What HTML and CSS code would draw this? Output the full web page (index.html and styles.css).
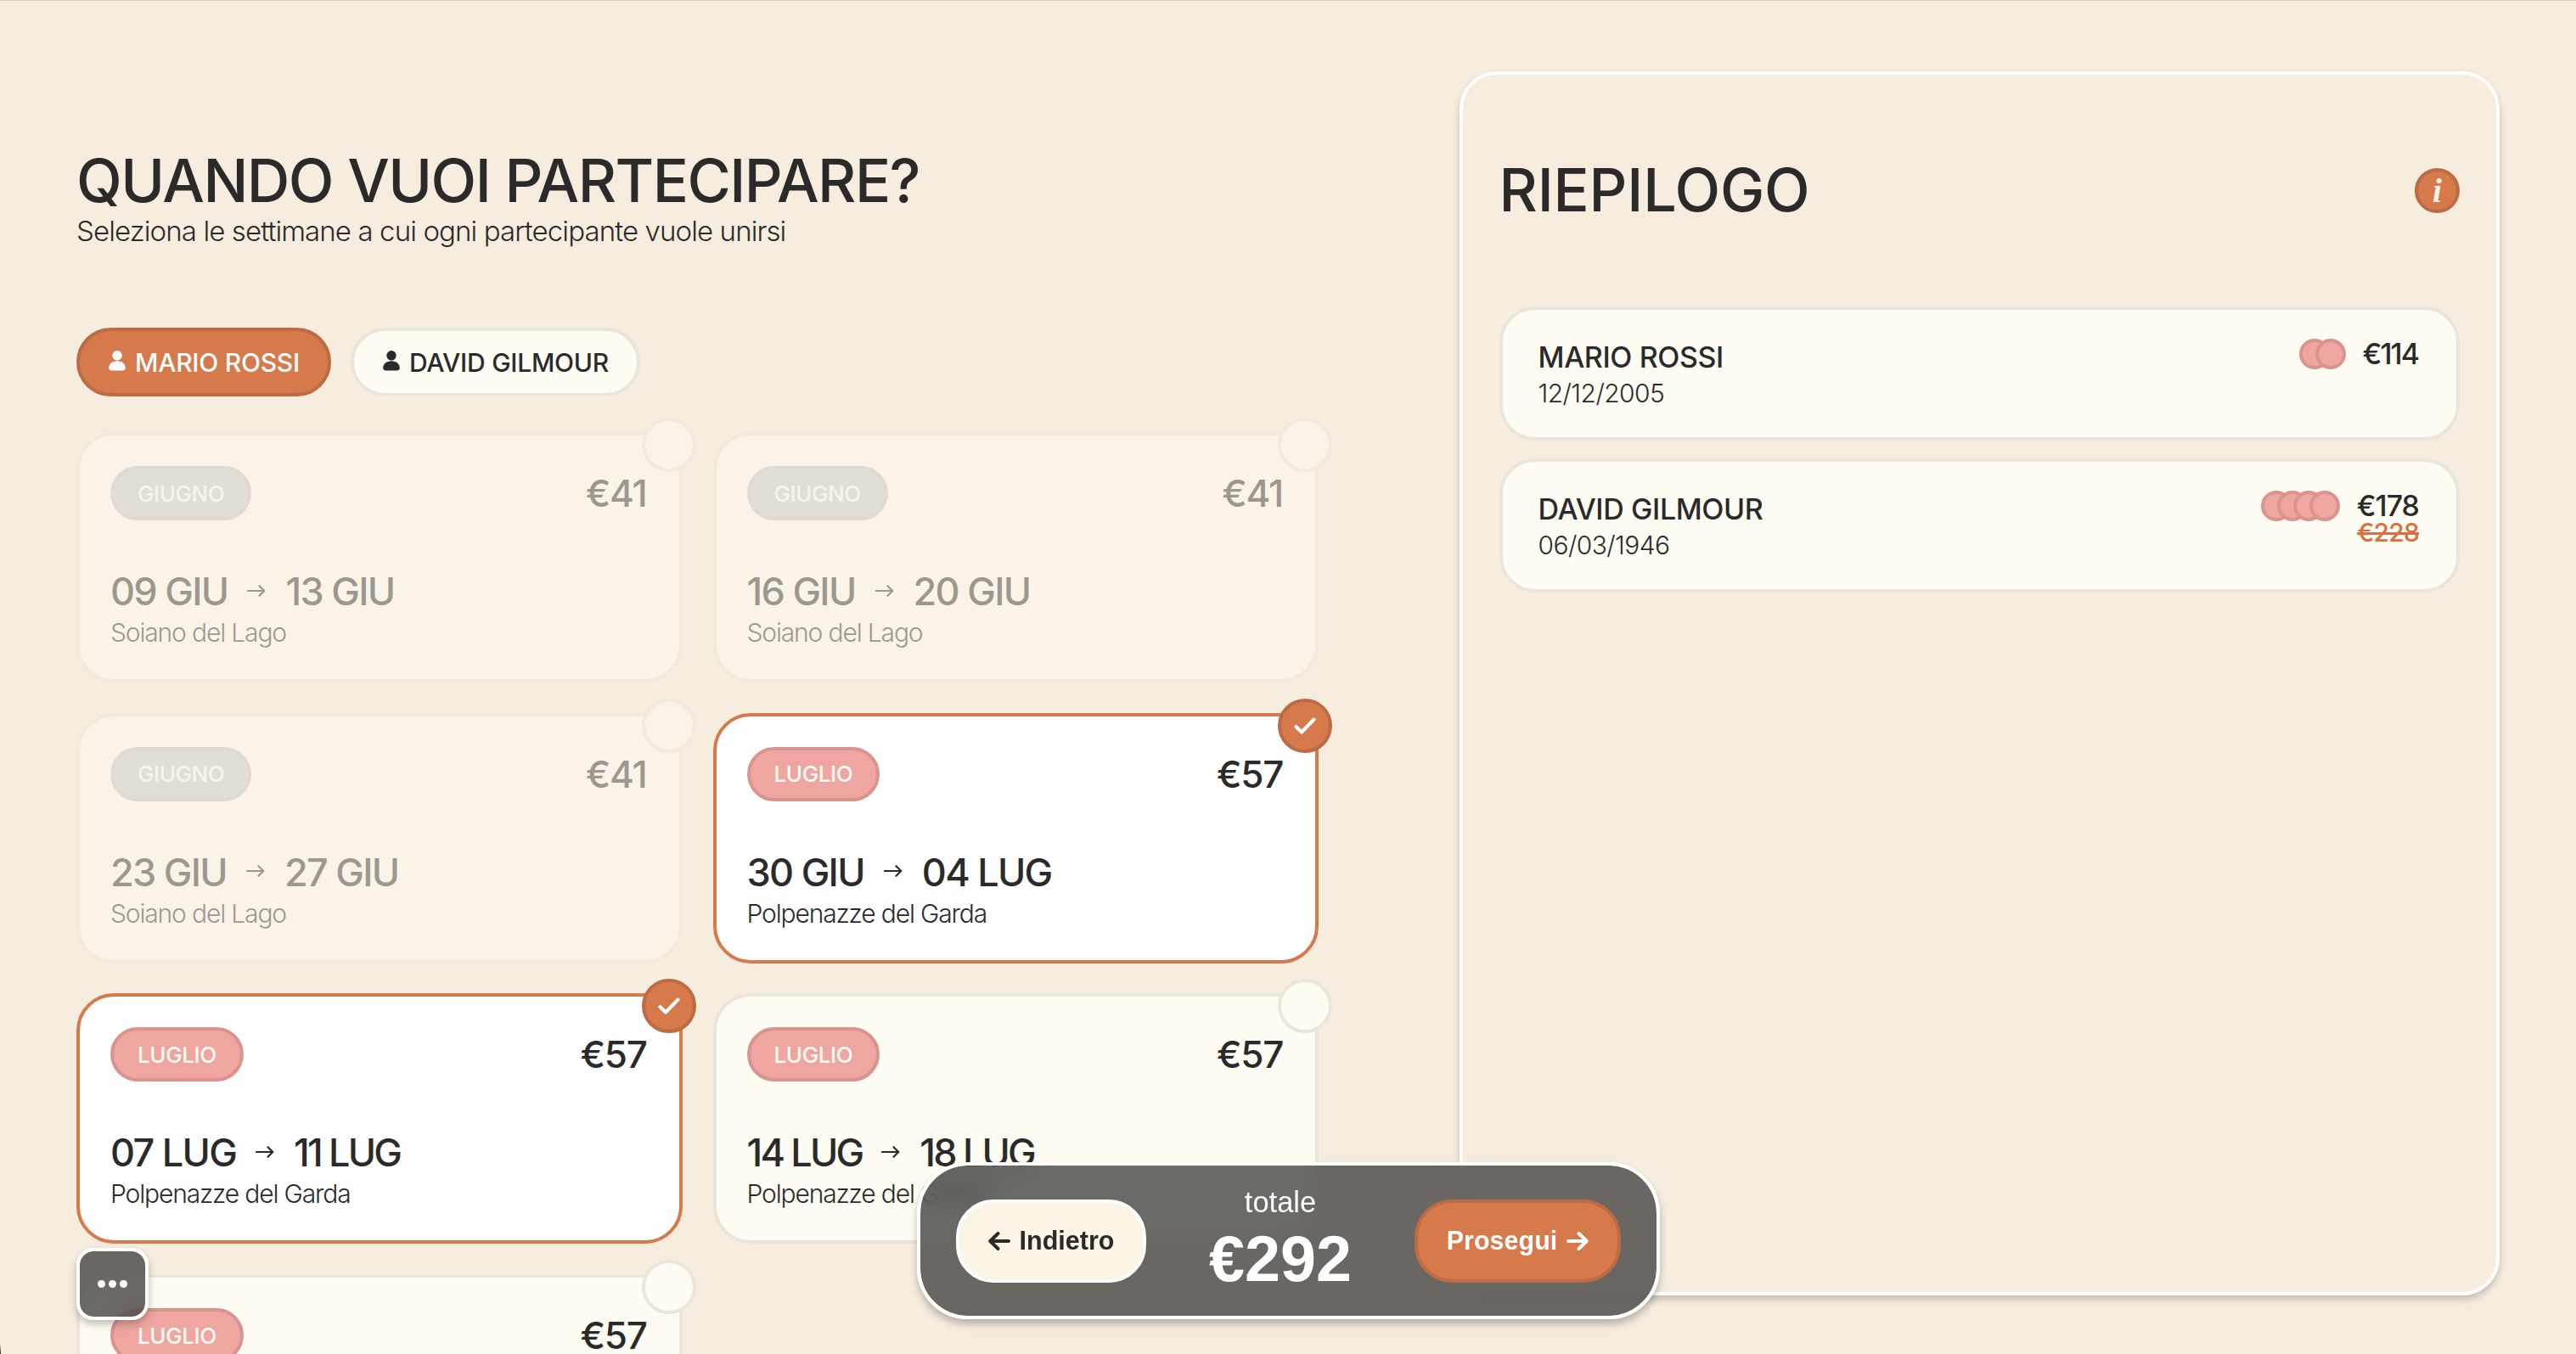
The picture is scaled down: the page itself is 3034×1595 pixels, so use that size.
FILE: index.html
```html
<!DOCTYPE html>
<html lang="it">
<head>
<meta charset="utf-8">
<title>Quando vuoi partecipare?</title>
<link rel="stylesheet" href="styles.css">
</head>
<body>
<svg class="sprite" aria-hidden="true">
  <symbol id="user" viewBox="0 0 20 24"><ellipse cx="10" cy="5.8" rx="5.7" ry="5.8"/><path d="M10 12.2c5.600 0 9.800 3.600 9.800 8 0 2.300-1.300 3.300-3.300 3.300h-13c-2 0-3.300-1-3.300-3.300 0-4.400 4.200-8 9.800-8z"/></symbol>
  <symbol id="thin-arrow" viewBox="0 0 22 14"><path d="M1 7h19M14.500 1.200L20.300 7l-5.800 5.800" fill="none" stroke="currentColor" stroke-width="2.200" stroke-linecap="round" stroke-linejoin="round"/></symbol>
  <symbol id="bold-arrow" viewBox="0 0 26 22"><path d="M2 11h21.500M14.500 2L23.800 11l-9.300 9" fill="none" stroke="currentColor" stroke-width="3.900" stroke-linecap="round" stroke-linejoin="round"/></symbol>
  <symbol id="check" viewBox="0 0 26 20"><path d="M2.500 11l6.500 6.500L23.500 2.500" fill="none" stroke="currentColor" stroke-width="4" stroke-linecap="round" stroke-linejoin="round"/></symbol>
</svg>
<main class="page">
  <section class="picker">
    <h1 class="title">QUANDO VUOI PARTECIPARE?</h1>
    <p class="subtitle">Seleziona le settimane a cui ogni partecipante vuole unirsi</p>
    <div class="tabs">
      <button class="tab tab-active"><svg class="user"><use href="#user"/></svg><span>MARIO ROSSI</span></button>
      <button class="tab"><svg class="user"><use href="#user"/></svg><span>DAVID GILMOUR</span></button>
    </div>
    <div class="weeks">
      <article class="week week-disabled"><i class="mark"></i>
        <div class="week-top"><span class="month">GIUGNO</span><span class="price">€41</span></div>
        <div class="dates"><span>09 GIU</span><svg class="to"><use href="#thin-arrow"/></svg><span>13 GIU</span></div>
        <div class="place">Soiano del Lago</div></article>
      <article class="week week-disabled"><i class="mark"></i>
        <div class="week-top"><span class="month">GIUGNO</span><span class="price">€41</span></div>
        <div class="dates"><span>16 GIU</span><svg class="to"><use href="#thin-arrow"/></svg><span>20 GIU</span></div>
        <div class="place">Soiano del Lago</div></article>
      <article class="week week-disabled"><i class="mark"></i>
        <div class="week-top"><span class="month">GIUGNO</span><span class="price">€41</span></div>
        <div class="dates"><span>23 GIU</span><svg class="to"><use href="#thin-arrow"/></svg><span>27 GIU</span></div>
        <div class="place">Soiano del Lago</div></article>
      <article class="week week-selected"><i class="mark"><svg class="check"><use href="#check"/></svg></i>
        <div class="week-top"><span class="month">LUGLIO</span><span class="price">€57</span></div>
        <div class="dates"><span>30 GIU</span><svg class="to"><use href="#thin-arrow"/></svg><span>04 LUG</span></div>
        <div class="place">Polpenazze del Garda</div></article>
      <article class="week week-selected"><i class="mark"><svg class="check"><use href="#check"/></svg></i>
        <div class="week-top"><span class="month">LUGLIO</span><span class="price">€57</span></div>
        <div class="dates"><span>07 LUG</span><svg class="to"><use href="#thin-arrow"/></svg><span class="tight">11 LUG</span></div>
        <div class="place">Polpenazze del Garda</div></article>
      <article class="week"><i class="mark"></i>
        <div class="week-top"><span class="month">LUGLIO</span><span class="price">€57</span></div>
        <div class="dates"><span class="tight">14 LUG</span><svg class="to"><use href="#thin-arrow"/></svg><span class="tight">18 LUG</span></div>
        <div class="place">Polpenazze del Garda</div></article>
      <article class="week"><i class="mark"></i>
        <div class="week-top"><span class="month">LUGLIO</span><span class="price">€57</span></div></article>
    </div>
  </section>
  <aside class="summary">
    <header class="summary-head"><h2 class="title">RIEPILOGO</h2><span class="info">i</span></header>
    <div class="person">
      <div class="who"><div class="name">MARIO ROSSI</div><div class="born">12/12/2005</div></div>
      <div class="dots"><i></i><i></i></div>
      <div class="cost"><span class="now tight">€114</span></div>
    </div>
    <div class="person">
      <div class="who"><div class="name">DAVID GILMOUR</div><div class="born">06/03/1946</div></div>
      <div class="dots"><i></i><i></i><i></i><i></i></div>
      <div class="cost"><span class="now">€178</span><s class="old">€228</s></div>
    </div>
  </aside>
</main>
<button class="more" aria-label="Menu"><i></i><i></i><i></i></button>
<footer class="bar">
  <button class="action back"><svg class="arrow arrow-left"><use href="#bold-arrow"/></svg><span>Indietro</span></button>
  <div class="total"><span class="total-label">totale</span><strong class="total-value">€292</strong></div>
  <button class="action next"><span>Prosegui</span><svg class="arrow"><use href="#bold-arrow"/></svg></button>
</footer>
</body>
</html>
```
FILE: styles.css
```css
* { box-sizing: border-box; }
html, body { margin: 0; height: 1595px; overflow: hidden; }
body { background: linear-gradient(#f7eddf, #222) left bottom / 1px 12px no-repeat #f7eddf; color: #2a2a2a; font-family: Inter, "Liberation Sans", sans-serif; font-weight: 500; border-top: 1px solid #d6ccc2; }
h1, h2, p { margin: 0; font-weight: inherit; }
button { font: inherit; color: inherit; margin: 0; padding: 0; }
.sprite { display: none; }
svg { display: block; flex: none; fill: currentColor; }

.page { display: flex; align-items: flex-start; justify-content: space-between; padding: 83px 90px 0; }
.picker { width: 1463px; padding-top: 93px; }
.title { font-size: 70px; line-height: 72px; letter-spacing: -1.500px; white-space: nowrap; }
.subtitle { font-size: 33px; line-height: 47px; font-weight: 300; letter-spacing: -.89px; }

.tabs { display: flex; gap: 23px; margin-top: 90px; }
.tab { display: flex; align-items: center; gap: 11px; height: 81px; padding: 0 33px 0 34px; border: 4.500px solid #ebe5da; border-radius: 41px; background: #fffcf4; font-size: 30px; letter-spacing: -.25px; white-space: nowrap; }
.tab-active { background: #d67a4c; border-color: #bc6b45; color: #fff; }
.user { width: 20px; height: 24px; margin-top: -4px; }

.weeks { display: grid; grid-template-columns: 1fr 1fr; gap: 35.700px 36px; margin-top: 42px; }
.week { position: relative; height: 295px; padding: 36px 38px 0 36px; border: 4px solid #ebe5da; border-radius: 44px; background: #fffcf4; }
.week-disabled { opacity: .44; }
.week-selected { background: #fff; border-color: #d67a4c; }
.mark { position: absolute; top: -21px; right: -20px; width: 64px; height: 64px; display: flex; align-items: center; justify-content: center; border: 4px solid #ebe5da; border-radius: 50%; background: #fffcf4; color: #fff; }
.week-selected .mark { background: #d67a4c; border-color: #bc6b45; }
.check { width: 26px; height: 20px; }
.week-top { display: flex; align-items: center; justify-content: space-between; height: 64px; }
.month { display: flex; align-items: center; height: 64px; padding: 0 28px; border: 4px solid #db938d; border-radius: 32px; background: #efa5a0; color: #fffcf4; font-size: 26px; letter-spacing: -.4px; }
.week-disabled .month { background: #c6cbcf; border-color: #c0c5c8; }
.price { font-size: 44px; letter-spacing: -1.300px; }
.dates { display: flex; align-items: center; gap: 23px; margin-top: 57px; font-size: 45px; line-height: 54px; letter-spacing: -1.700px; }
.dates .tight { letter-spacing: -2.800px; }
.to { width: 22px; height: 14px; margin-top: -3px; }
.place { font-size: 30px; line-height: 42px; font-weight: 300; letter-spacing: -1.150px; }

.summary { width: 1225.500px; height: 1442px; padding: 109px 43px 0; border: 4.500px solid #fff; border-radius: 44px; box-shadow: 0 5px 8px rgba(0, 0, 0, .2); }
.summary-head { display: flex; align-items: center; justify-content: space-between; height: 54px; margin-bottom: 110px; }
.summary-head .title { letter-spacing: -.200px; }
.info { display: flex; align-items: center; justify-content: center; width: 53px; height: 53px; border: 4px solid #bc6b45; border-radius: 50%; background: #d67a4c; color: #fcf4e4; font: italic bold 39px/1 "Liberation Serif", serif; }
.person { display: flex; align-items: flex-start; height: 157.500px; margin-bottom: 21.700px; padding: 34px 44px 0 42px; border: 4px solid #ebe5da; border-radius: 42px; background: #fffcf4; }
.who { flex: 1; }
.name { font-size: 34px; line-height: 44px; letter-spacing: -.400px; }
.born { font-size: 30px; line-height: 40px; font-weight: 300; letter-spacing: -.600px; }
.dots { display: flex; margin-right: 20px; }
.dots i { width: 36px; height: 36px; border: 4px solid #db938d; border-radius: 50%; background: #efa5a0; }
.dots i + i { margin-left: -17px; }
.cost { display: flex; flex-direction: column; align-items: flex-end; }
.now { font-size: 34px; line-height: 36px; letter-spacing: -1px; }
.now.tight { letter-spacing: -2px; margin-right: 1px; }
.old { font-size: 30px; line-height: 26px; letter-spacing: -.8px; color: #d8703f; }

.more { position: fixed; left: 90px; top: 1470px; width: 85px; height: 85px; display: flex; align-items: center; justify-content: center; gap: 4px; border: 4.500px solid #fff; border-radius: 20px; background: rgba(45, 44, 43, .7); background-clip: padding-box; backdrop-filter: blur(16px); box-shadow: 0 5px 10px rgba(0, 0, 0, .25); }
.more i { width: 9px; height: 9px; border-radius: 50%; background: #fff; }

.bar { position: fixed; left: 1080px; top: 1369px; width: 875px; height: 185px; display: flex; align-items: center; justify-content: space-between; padding: 0 42px; border: 4.500px solid #fff; border-radius: 60px; background: rgba(45, 44, 43, .7); background-clip: padding-box; backdrop-filter: blur(16px); box-shadow: 0 6px 10px rgba(0, 0, 0, .25); color: #fff; font-family: "Liberation Sans", sans-serif; }
.action { display: flex; align-items: center; justify-content: center; gap: 11px; height: 98px; border-radius: 44px; font-size: 30.500px; font-weight: 700; }
.back { width: 224px; border: 4.500px solid #fff; background: #fcf4e4; color: #2a2a2a; }
.next { width: 243px; border: 4.500px solid #bc6b45; background: #d67a4c; color: #fff; }
.arrow { width: 26px; height: 22px; }
.arrow-left { transform: scaleX(-1); }
.total { display: flex; flex-direction: column; align-items: center; gap: 7px; margin-top: -5px; }
.total-label { font-size: 34.500px; line-height: 40px; font-weight: 400; }
.total-value { font-size: 75.500px; line-height: 80px; font-weight: 700; }
```
